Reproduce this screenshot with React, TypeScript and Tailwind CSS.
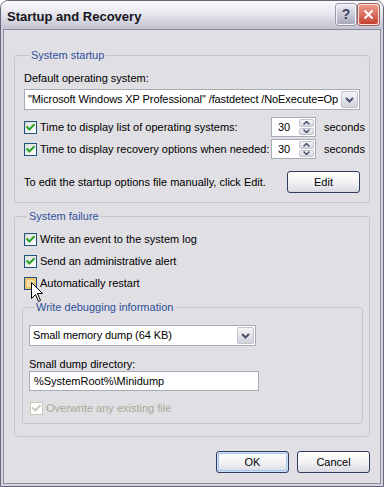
import React from "react";

function CheckMark({ color }: { color: string }) {
  return (
    <svg width="11" height="11" viewBox="0 0 11 11">
      <path d="M2.2 5.2 L4.4 7.4 L8.8 3" fill="none" stroke={color} strokeWidth="2" strokeLinecap="square" />
    </svg>
  );
}

function CheckBox({ checked, hover, disabled }: { checked?: boolean; hover?: boolean; disabled?: boolean }) {
  if (disabled) {
    return (
      <span className="w-[13px] h-[13px] flex-none flex items-center justify-center border border-[#cac8bb] bg-white">
        {checked && <CheckMark color="#cac8bb" />}
      </span>
    );
  }
  return (
    <span className="w-[13px] h-[13px] flex-none flex items-center justify-center border border-[#1c5180] bg-linear-to-br from-[#dcdcd7] to-white">
      {hover && <span className="w-[11px] h-[11px] border-2 border-[#eec46a] bg-[#f3dfa6]" />}
      {checked && <CheckMark color="#21a121" />}
    </span>
  );
}

function CheckRow({ label, checked, hover, disabled, h = "h-[22px]" }: { label: string; checked?: boolean; hover?: boolean; disabled?: boolean; h?: string }) {
  return (
    <div className={`flex items-center gap-[3px] ${h}`}>
      <CheckBox checked={checked} hover={hover} disabled={disabled} />
      <span className={disabled ? "text-[#aca899]" : "text-black"}>{label}</span>
    </div>
  );
}

function DropButton() {
  return (
    <span className="w-[17px] h-full flex-none flex items-center justify-center rounded-[2px] border border-[#c3c3cf] bg-linear-to-b from-[#f6f6f8] to-[#d2d2dc]">
      <svg width="9" height="6" viewBox="0 0 9 6">
        <path d="M1 1 L4.5 4.5 L8 1" fill="none" stroke="#4c5370" strokeWidth="2" />
      </svg>
    </span>
  );
}

function Select({ text, className }: { text: string; className: string }) {
  return (
    <div className={`flex min-w-0 border border-[#a5acb5] bg-white p-[1px] ${className}`}>
      <span className="flex-1 min-w-0 overflow-hidden whitespace-nowrap pl-[2px] leading-[17px] tracking-[-0.1px]">{text}</span>
      <DropButton />
    </div>
  );
}

function SpinBtn({ up }: { up?: boolean }) {
  return (
    <span className="flex-1 flex items-center justify-center rounded-[2px] border border-[#c3c3cf] bg-linear-to-b from-[#f6f6f8] to-[#d6d6de]">
      <svg width="7" height="4" viewBox="0 0 7 4">
        <path d={up ? "M0.5 3.5 L3.5 0.5 L6.5 3.5" : "M0.5 0.5 L3.5 3.5 L6.5 0.5"} fill="none" stroke="#4c5370" strokeWidth="1.5" />
      </svg>
    </span>
  );
}

function Spinner() {
  return (
    <div className="flex flex-none h-[20px] w-[45px] border border-[#a5acb5] bg-white p-[1px]">
      <span className="flex-1 pl-[5px] leading-[16px]">30</span>
      <div className="w-[15px] flex flex-col gap-[1px]">
        <SpinBtn up />
        <SpinBtn />
      </div>
    </div>
  );
}

function XpButton({ label, isDefault, className = "" }: { label: string; isDefault?: boolean; className?: string }) {
  return (
    <button
      className={`h-[22px] w-[73px] flex-none rounded-[3px] border border-[#2f3c5e] bg-linear-to-b from-white via-[#f3f3f6] to-[#d8d8e2] text-black ${
        isDefault ? "shadow-[inset_0_0_0_1px_#cee0f8,inset_0_0_0_2px_#a9c4ee]" : ""
      } ${className}`}
    >
      {label}
    </button>
  );
}

export default function App() {
  return (
    <div className="relative w-[384px] h-[487px] bg-white font-['Liberation_Sans',Arial,sans-serif] text-[11px] leading-[13px] text-black">
      <div className="flex flex-col h-full border border-[#66667a] rounded-t-[8px] overflow-hidden bg-[#d4d4de]">
        {/* Title bar */}
        <div className="h-[28px] flex-none flex items-start justify-between pl-[6px] pr-[4px] bg-linear-to-b from-[#fbfbfd] via-[#e4e4ec] to-[#c2c2d0]">
          <span className="mt-[8px] font-bold text-[13px] leading-[16px] text-[#151520]">Startup and Recovery</span>
          <div className="flex gap-[2px] mt-[3px]">
            <span className="w-[20px] h-[21px] flex items-center justify-center rounded-[3px] border border-[#f4f4f8] bg-linear-to-b from-[#ececf2] to-[#a8a8bc] font-bold text-[14px] text-[#3f4260] shadow-[0_0_0_1px_#9a9aae]">
              ?
            </span>
            <span className="w-[21px] h-[21px] flex items-center justify-center rounded-[3px] border border-[#f6e0dc] bg-linear-to-b from-[#ec9a8c] to-[#c44030] shadow-[0_0_0_1px_#a0605a]">
              <svg width="11" height="11" viewBox="0 0 11 11">
                <path d="M1.5 1.5 L9.5 9.5 M9.5 1.5 L1.5 9.5" stroke="white" strokeWidth="2" />
              </svg>
            </span>
          </div>
        </div>

        {/* Client area */}
        <div className="flex-1 min-w-0 flex flex-col mx-[2px] mb-[2px] border border-[#8a8a9c] bg-[#e0dfe3] pt-[19px] px-[10px]">
          <fieldset className="min-w-0 border border-[#c5c5cc] rounded-[3px] pl-[9px] pr-[9px] pb-[9px]">
            <legend className="ml-[5px] px-[2px] leading-[13px] text-[#2e4f9c]">System startup</legend>
            <div className="mt-[10px]">Default operating system:</div>
            <Select
              className="mt-[4px] h-[21px]"
              text={'"Microsoft Windows XP Professional" /fastdetect /NoExecute=Op'}
            />
            <div className="mt-[6px] flex items-center h-[22px]">
              <div className="flex-1 min-w-0"><CheckRow label="Time to display list of operating systems:" checked /></div>
              <Spinner />
              <span className="ml-[8px] w-[36px] whitespace-nowrap">seconds</span>
            </div>
            <div className="flex items-center h-[22px]">
              <div className="flex-1 min-w-0"><CheckRow label="Time to display recovery options when needed:" checked /></div>
              <Spinner />
              <span className="ml-[8px] w-[36px] whitespace-nowrap">seconds</span>
            </div>
            <div className="mt-[11px] flex items-center justify-between h-[22px]">
              <span>To edit the startup options file manually, click Edit.</span>
              <XpButton label="Edit" />
            </div>
          </fieldset>

          <fieldset className="min-w-0 mt-[7px] border border-[#c5c5cc] rounded-[3px] pl-[7px] pr-[6px] pb-[12px]">
            <legend className="ml-[5px] px-[2px] leading-[13px] text-[#2e4f9c]">System failure</legend>
            <div className="mt-[5px] ml-[2px]">
              <CheckRow label="Write an event to the system log" checked />
              <CheckRow label="Send an administrative alert" checked />
              <CheckRow label="Automatically restart" hover />
            </div>
            <fieldset className="min-w-0 mt-[7px] border border-[#c5c5cc] rounded-[3px] pl-[6px] pb-[5px]">
              <legend className="ml-[5px] px-[2px] leading-[13px] text-[#2e4f9c]">Write debugging information</legend>
              <Select className="mt-[11px] h-[21px] w-[227px]" text="Small memory dump (64 KB)" />
              <div className="mt-[12px]">Small dump directory:</div>
              <div className="h-[20px] w-[230px] border border-[#a5acb5] bg-white pl-[4px] leading-[18px]">%SystemRoot%\Minidump</div>
              <div className="mt-[7px] ml-[1px]">
                <CheckRow label="Overwrite any existing file" checked disabled h="h-[20px]" />
              </div>
            </fieldset>
          </fieldset>

          <div className="mt-[14px] flex justify-end gap-[8px]">
            <XpButton label="OK" isDefault />
            <XpButton label="Cancel" />
          </div>
        </div>
      </div>

      {/* Mouse pointer over the checkbox */}
      <svg className="absolute left-[31px] top-[282px]" width="13" height="21" viewBox="0 0 13 21">
        <path d="M0.5 0.5 L0.5 16.5 L4.5 12.5 L7.5 19.5 L9.5 18.5 L6.5 11.5 L11.5 11.5 Z" fill="white" stroke="black" strokeWidth="1" strokeLinejoin="miter" />
      </svg>
    </div>
  );
}
